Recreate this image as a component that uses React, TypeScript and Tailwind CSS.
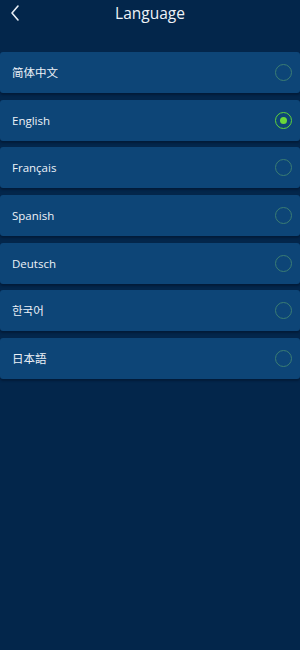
import React from "react";

const langs = ["简体中文", "English", "Français", "Spanish", "Deutsch", "한국어", "日本語"];

export default function App() {
  const selected = 1;
  return (
    <div
      className="w-[300px] h-[650px] bg-[#03264b] flex flex-col"
      style={{ fontFamily: '"Open Sans", "Noto Sans", "Noto Sans CJK SC", "Noto Sans CJK KR", "Noto Sans CJK JP", sans-serif' }}
    >
      <div className="relative h-[26px] flex items-center justify-center">
        <svg className="absolute left-[9px] top-[4px]" width="12" height="18" viewBox="0 0 12 18" fill="none">
          <path d="M9 2 L3 9 L9 16" stroke="#e8eef5" strokeWidth="1.6" strokeLinecap="round" strokeLinejoin="round" />
        </svg>
        <span className="text-[15.5px] text-[#eef2f7] leading-none mt-[1px]">Language</span>
      </div>
      <div className="mt-[26px] flex flex-col gap-[6.7px]">
        {langs.map((l, i) => (
          <div
            key={l}
            className="h-[41px] bg-[#0d4577] rounded-[3px] flex items-center justify-between pl-[12px] pr-[8px] shadow-[0_2px_2px_rgba(0,15,35,0.45)]"
          >
            <span className="text-[11.5px] text-[#eef2f7]">{l}</span>
            {i === selected ? (
              <div className="w-[17px] h-[17px] rounded-full border-[1.5px] border-[#5fd33a] flex items-center justify-center">
                <div className="w-[7px] h-[7px] rounded-full bg-[#6ad83a]" />
              </div>
            ) : (
              <div className="w-[17px] h-[17px] rounded-full border-[1.3px] border-[#3b7d73]" />
            )}
          </div>
        ))}
      </div>
      <div className="flex-1" />
    </div>
  );
}
